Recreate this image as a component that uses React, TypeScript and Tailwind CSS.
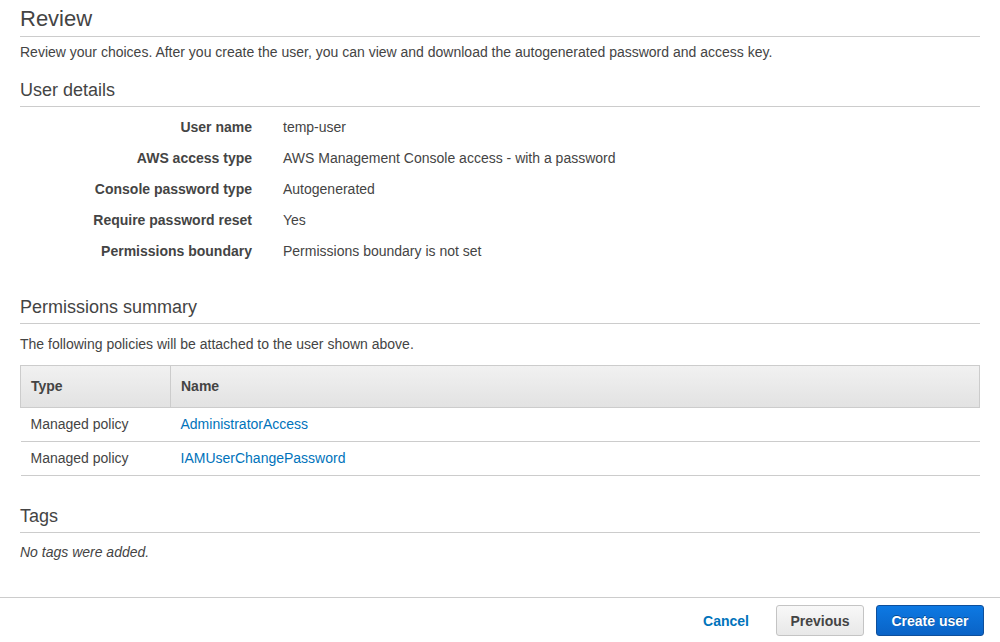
const details: [string, string][] = [
  ['User name', 'temp-user'],
  ['AWS access type', 'AWS Management Console access - with a password'],
  ['Console password type', 'Autogenerated'],
  ['Require password reset', 'Yes'],
  ['Permissions boundary', 'Permissions boundary is not set'],
]

const policies = ['AdministratorAccess', 'IAMUserChangePassword']

function SectionTitle({ children }: { children: string }) {
  return <div className="border-b border-[#cccccc] pb-[5px] pt-[2px] text-[18px] leading-[22px]">{children}</div>
}

export default function App() {
  return (
    <div
      className="min-h-[642px] bg-white text-[#444444] flex flex-col text-[14px]"
      style={{ fontFamily: '"Liberation Sans", Arial, sans-serif' }}
    >
      <div className="px-[20px]">
        {/* Review header */}
        <div className="border-b border-[#cccccc] pt-[5px] pb-[4px] text-[22px] leading-[27px]">Review</div>
        <p className="mt-[6px] leading-[18px]">
          Review your choices. After you create the user, you can view and download the autogenerated password and
          access key.
        </p>

        {/* User details */}
        <div className="mt-[16px]">
          <SectionTitle>User details</SectionTitle>
        </div>
        <div className="mt-[5px]">
          {details.map(([label, value]) => (
            <div key={label} className="flex items-center h-[31px]">
              <div className="w-[232px] text-right font-bold">{label}</div>
              <div className="ml-[31px]">{value}</div>
            </div>
          ))}
        </div>

        {/* Permissions summary */}
        <div className="mt-[27px]">
          <SectionTitle>Permissions summary</SectionTitle>
        </div>
        <p className="mt-[11px] leading-[18px]">The following policies will be attached to the user shown above.</p>

        <table className="mt-[12px] w-full border-collapse">
          <thead>
            <tr className="bg-gradient-to-b from-[#f1f1f1] to-[#e2e2e2]">
              <th className="h-[42px] w-[150px] border border-[#cccccc] px-[10px] text-left font-bold">Type</th>
              <th className="h-[42px] border border-[#cccccc] px-[10px] text-left font-bold">Name</th>
            </tr>
          </thead>
          <tbody>
            {policies.map((p) => (
              <tr key={p} className="border-b border-[#cccccc]">
                <td className="h-[34px] px-[10px]">Managed policy</td>
                <td className="h-[34px] px-[10px] text-[#0073bb]">{p}</td>
              </tr>
            ))}
          </tbody>
        </table>

        {/* Tags */}
        <div className="mt-[27px]">
          <SectionTitle>Tags</SectionTitle>
        </div>
        <p className="mt-[10px] leading-[18px] italic">No tags were added.</p>
      </div>

      {/* Footer */}
      <div className="mt-[36px] border-t border-[#cccccc] pt-[7px] pr-[16px] flex items-center justify-end">
        <span className="font-bold text-[#0073bb] mr-[27px] pt-[1px]">Cancel</span>
        <button className="h-[31px] w-[88px] rounded-[3px] border border-[#c4c4c4] bg-gradient-to-b from-[#f8f8f8] to-[#e8e8e8] pt-[1px] font-bold text-[#444444]">
          Previous
        </button>
        <button className="ml-[12px] h-[31px] w-[108px] rounded-[3px] border border-[#0d4f9c] bg-gradient-to-b from-[#0d79e3] to-[#0a63c6] pt-[1px] font-bold text-white [text-shadow:0_-1px_0_rgba(0,0,0,0.35)]">
          Create user
        </button>
      </div>
    </div>
  )
}
